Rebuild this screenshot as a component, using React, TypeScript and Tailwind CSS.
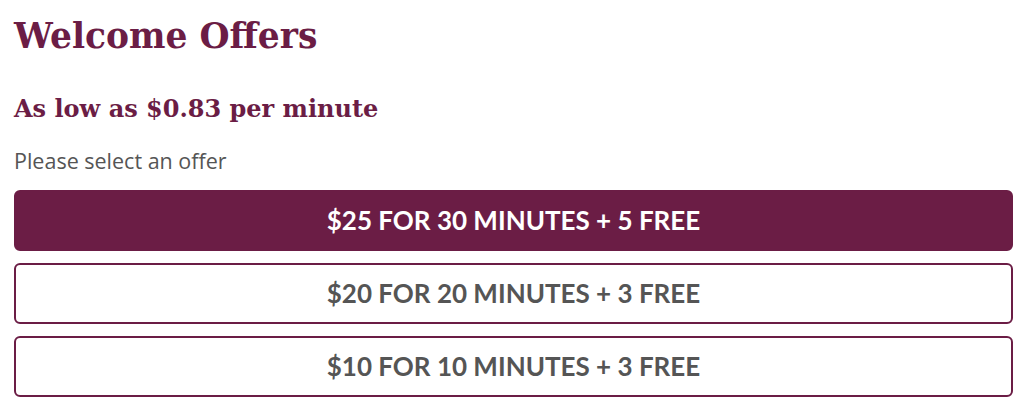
const offers = [
  { label: '$25 FOR 30 MINUTES + 5 FREE', selected: true },
  { label: '$20 FOR 20 MINUTES + 3 FREE', selected: false },
  { label: '$10 FOR 10 MINUTES + 3 FREE', selected: false },
]

export default function App() {
  return (
    <div className="h-[410px] w-[1024px] bg-white px-[14px] pt-[14px]">
      <h1 className="font-['DejaVu_Serif',serif] text-[34.5px] font-bold leading-[44px] text-[#6b1d45]">
        Welcome Offers
      </h1>
      <h2 className="mt-[36px] font-['DejaVu_Serif',serif] text-[24px] font-bold leading-[30px] text-[#6b1d45]">
        As low as $0.83 per minute
      </h2>
      <p className="mt-[23px] font-['Open_Sans',sans-serif] text-[21.5px] leading-[28px] text-[#555]">
        Please select an offer
      </p>
      <div className="mt-[15px] flex w-[999px] flex-col gap-[12px]">
        {offers.map((o) => (
          <button
            key={o.label}
            className={
              o.selected
                ? "flex h-[61px] items-center justify-center rounded-[6px] border-2 border-[#6b1d45] bg-[#6b1d45] font-['Lato',sans-serif] text-[26px] font-bold text-white"
                : "flex h-[61px] items-center justify-center rounded-[6px] border-2 border-[#6b1d45] bg-white font-['Lato',sans-serif] text-[26px] font-bold text-[#555]"
            }
          >
            {o.label}
          </button>
        ))}
      </div>
    </div>
  )
}
